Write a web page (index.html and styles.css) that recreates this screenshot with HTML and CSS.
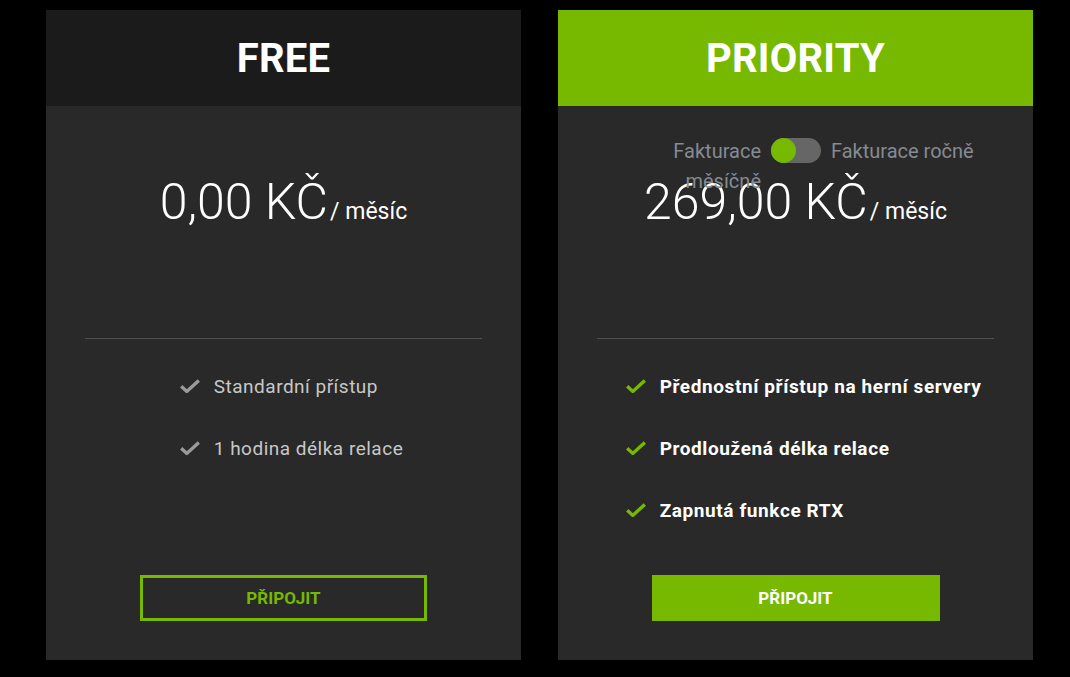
FILE: index.html
```html
<!DOCTYPE html>
<html lang="cs">
<head>
  <meta charset="UTF-8">
  <meta name="viewport" content="width=device-width, initial-scale=1.0">
  <title>Členství</title>
  <link rel="stylesheet" href="styles.css">
</head>
<body>
  <div class="plans">
    <div class="card">
      <div class="card-head">
        <h2>FREE</h2>
      </div>
      <div class="card-body">
        <div class="price-area">
          <p class="price">0,00 KČ<span class="per">/ měsíc</span></p>
        </div>
        <hr class="divider">
        <ul class="features">
          <li>
            <svg class="check" viewBox="0 0 20 14"><path d="M1.2 7.2 L6.8 12.4 L18.8 1.4" /></svg>
            Standardní přístup
          </li>
          <li>
            <svg class="check" viewBox="0 0 20 14"><path d="M1.2 7.2 L6.8 12.4 L18.8 1.4" /></svg>
            1 hodina délka relace
          </li>
        </ul>
        <a href="#" class="join-button outline">PŘIPOJIT</a>
      </div>
    </div>

    <div class="card priority">
      <div class="card-head">
        <h2>PRIORITY</h2>
      </div>
      <div class="card-body">
        <div class="billing">
          <span class="billing-label left">Fakturace měsíčně</span>
          <span class="switch"><span class="knob"></span></span>
          <span class="billing-label">Fakturace ročně</span>
        </div>
        <div class="price-area">
          <p class="price">269,00 KČ<span class="per">/ měsíc</span></p>
        </div>
        <hr class="divider">
        <ul class="features">
          <li>
            <svg class="check" viewBox="0 0 20 14"><path d="M1.2 7.2 L6.8 12.4 L18.8 1.4" /></svg>
            Přednostní přístup na herní servery
          </li>
          <li>
            <svg class="check" viewBox="0 0 20 14"><path d="M1.2 7.2 L6.8 12.4 L18.8 1.4" /></svg>
            Prodloužená délka relace
          </li>
          <li>
            <svg class="check" viewBox="0 0 20 14"><path d="M1.2 7.2 L6.8 12.4 L18.8 1.4" /></svg>
            Zapnutá funkce RTX
          </li>
        </ul>
        <a href="#" class="join-button solid">PŘIPOJIT</a>
      </div>
    </div>
  </div>
</body>
</html>
```

FILE: styles.css
```css
body {
  margin: 0;
  background-color: #000;
  font-family: Roboto, "Liberation Sans", sans-serif;
  color: #fff;
}
.plans {
  display: flex;
  gap: 37px;
  padding: 10px 0 0 46px;
}
.card {
  width: 475px;
  height: 650px;
  background-color: #292929;
  display: flex;
  flex-direction: column;
}
.card-head {
  height: 96px;
  background-color: #1b1b1b;
  display: flex;
  align-items: center;
  justify-content: center;
}
.priority .card-head {
  background-color: #76b900;
}
.card-head h2 {
  margin: 0;
  font-size: 40px;
  font-weight: 700;
  letter-spacing: 0.2px;
}
.card-body {
  position: relative;
  flex: 1;
  display: flex;
  flex-direction: column;
  align-items: center;
  padding-bottom: 39px;
}
.price-area {
  height: 232px;
  width: 100%;
}
.price {
  margin: 66px 0 0;
  text-align: center;
  font-size: 50px;
  font-weight: 300;
  line-height: 60px;
}
.per {
  font-size: 23px;
  font-weight: 400;
  margin-left: 2px;
}
.divider {
  width: 397px;
  margin: 0;
  border: none;
  border-top: 1px solid #4f4f4f;
}
.features {
  list-style: none;
  margin: 16px 0 0;
  padding: 0 0 0 16px;
  flex: 1;
}
.features li {
  height: 62px;
  display: flex;
  align-items: center;
  font-size: 19px;
  letter-spacing: 0.5px;
  color: #c8c8c8;
}
.priority .features li {
  font-weight: 700;
  letter-spacing: 0.6px;
  color: #fff;
}
.check {
  width: 20px;
  height: 14px;
  margin-right: 14px;
  fill: none;
  stroke: #9a9a9a;
  stroke-width: 3.4;
}
.priority .check {
  stroke: #76b900;
}
.join-button {
  box-sizing: border-box;
  width: 287px;
  height: 46px;
  display: flex;
  align-items: center;
  justify-content: center;
  font-size: 17px;
  font-weight: 700;
  text-decoration: none;
}
.outline {
  border: 3px solid #76b900;
  color: #76b900;
}
.solid {
  width: 288px;
  background-color: #76b900;
  color: #fff;
}
.billing {
  position: absolute;
  top: 30px;
  left: 0;
  display: flex;
  align-items: flex-start;
  gap: 10px;
  padding-left: 113px;
  font-size: 20px;
  line-height: 30px;
  color: #858b92;
}
.billing-label.left {
  width: 90px;
  text-align: right;
}
.switch {
  width: 50px;
  height: 25px;
  margin-top: 2px;
  border-radius: 13px;
  background-color: #666;
  position: relative;
}
.knob {
  position: absolute;
  left: 0;
  top: 0;
  width: 25px;
  height: 25px;
  border-radius: 50%;
  background-color: #76b900;
}
```
